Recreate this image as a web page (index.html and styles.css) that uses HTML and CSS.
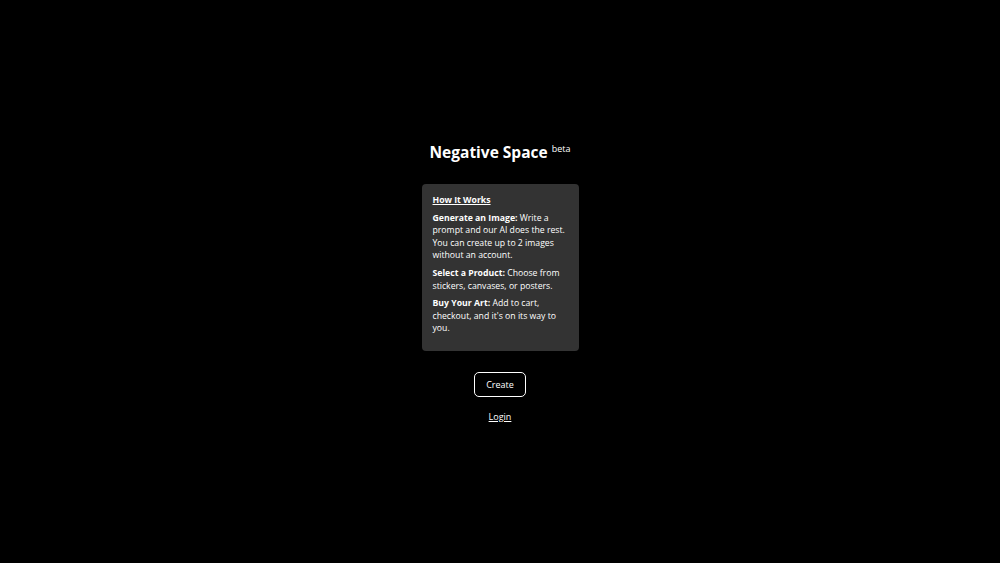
FILE: index.html
```html
<!DOCTYPE html>
<html lang="en">
<head>
<meta charset="utf-8">
<title>Negative Space</title>
<link rel="stylesheet" href="styles.css">
</head>
<body>
<main class="page">
  <h1 class="title">Negative Space <sup class="beta">beta</sup></h1>
  <section class="card">
    <h2 class="card-title">How It Works</h2>
    <p class="step"><strong>Generate an Image:</strong> Write a prompt and our AI does the rest. You can create up to 2 images without an account.</p>
    <p class="step"><strong>Select a Product:</strong> Choose from stickers, canvases, or posters.</p>
    <p class="step"><strong>Buy Your Art:</strong> Add to cart, checkout, and it's on its way to you.</p>
  </section>
  <button class="create">Create</button>
  <a class="login" href="#">Login</a>
</main>
</body>
</html>
```
FILE: styles.css
```css
html, body {
  margin: 0;
  padding: 0;
  background: #000;
  color: #fff;
  font-family: "Open Sans", "Liberation Sans", sans-serif;
}
.page {
  height: 563px;
  box-sizing: border-box;
  padding-top: 142px;
  display: flex;
  flex-direction: column;
  align-items: center;
}
.title {
  margin: 0 0 22px 0;
  font-size: 15.5px;
  font-weight: 700;
  line-height: 20px;
}
.beta {
  font-size: 9px;
  font-weight: 400;
  vertical-align: 6px;
  line-height: 0;
}
.card {
  width: 135px;
  padding: 10px 11px 16px;
  background: #333;
  border-radius: 4px;
  font-size: 8.7px;
  line-height: 12.6px;
}
.card-title {
  margin: 0 0 5px 0;
  font-size: 8.7px;
  font-weight: 700;
  text-decoration: underline;
  line-height: 12.6px;
}
.step {
  margin: 0 0 5px 0;
}
.step:last-child { margin-bottom: 0; }
.step strong { font-weight: 700; }
.create {
  margin-top: 21px;
  width: 52px;
  height: 25px;
  background: transparent;
  color: #fff;
  border: 1.5px solid #fff;
  border-radius: 5px;
  font-family: inherit;
  font-size: 9px;
  padding: 0;
}
.login {
  margin-top: 13px;
  color: #fff;
  font-size: 9px;
  text-decoration: underline;
}
```
